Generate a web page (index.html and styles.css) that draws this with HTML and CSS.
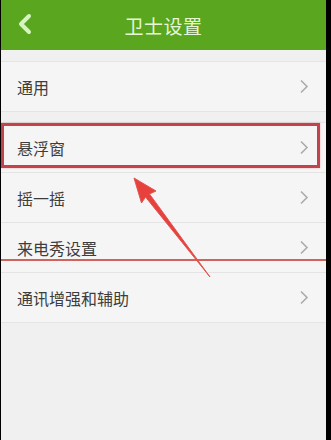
FILE: index.html
```html
<!DOCTYPE html>
<html lang="zh-CN">
<head>
    <meta charset="UTF-8">
    <meta name="viewport" content="width=device-width, initial-scale=1.0">
    <title>卫士设置</title>
    <link rel="stylesheet" href="styles.css">
</head>
<body>
    <div class="screen">
        <div class="topbar">
            <svg class="back" width="16" height="22" viewBox="0 0 16 22">
                <polyline points="12,3 4,11 12,19" fill="none" stroke="#d6f4c2" stroke-width="4" stroke-linecap="round" stroke-linejoin="round"/>
            </svg>
            <h1>卫士设置</h1>
        </div>

        <div class="list">
            <div class="group">
                <div class="row"><span>通用</span><i class="chev"></i></div>
            </div>
            <div class="group">
                <div class="row"><span>悬浮窗</span><i class="chev"></i></div>
                <div class="row"><span>摇一摇</span><i class="chev"></i></div>
                <div class="row"><span>来电秀设置</span><i class="chev"></i></div>
                <div class="row"><span>通讯增强和辅助</span><i class="chev"></i></div>
            </div>
        </div>

        <div class="mark-box"></div>
        <div class="mark-line"></div>
        <svg class="mark-arrow" width="331" height="440" viewBox="0 0 331 440">
            <polygon points="134,178 156,191 149.5,194 210,277 145.5,197 141.5,203" fill="#e8403c" stroke="#e25550" stroke-width="1" stroke-linejoin="round"/>
        </svg>
    </div>

    <script>
        document.querySelectorAll('.chev').forEach(function (el) {
            el.innerHTML = '<svg width="10" height="15" viewBox="0 0 10 15"><polyline points="2,1.5 8,7.5 2,13.5" fill="none" stroke="#ababab" stroke-width="1.6"/></svg>';
        });
    </script>
</body>
</html>
```

FILE: styles.css
```css
html {
    background-color: #000;
}

body {
    margin: 0;
    background-color: #000;
    font-family: "Noto Sans CJK SC", "Noto Sans", sans-serif;
}

.screen {
    position: relative;
    width: 325px;
    height: 440px;
    margin-left: 1px;
    background-color: #f0f0f0;
    overflow: hidden;
}

.topbar {
    position: relative;
    height: 50px;
    display: flex;
    align-items: center;
    justify-content: center;
    background-color: #5ba61f;
}

.topbar .back {
    position: absolute;
    left: 16px;
    top: 13px;
}

.topbar h1 {
    margin: 0;
    font-size: 19px;
    font-weight: normal;
    color: #e6f7d6;
    letter-spacing: 0.5px;
}

.list {
    padding-top: 11px;
}

.group {
    border-top: 1px solid #e4e1f0;
    border-bottom: 1px solid #e4e4e4;
    background-color: #f5f5f5;
}

.group + .group {
    margin-top: 10px;
    border-top-color: #e4e4e4;
}

.row {
    height: 49px;
    display: flex;
    align-items: center;
    justify-content: space-between;
    padding: 0 17px 0 16px;
    font-size: 16px;
    color: #3d3d3d;
}

.row + .row {
    border-top: 1px solid #e4e4e4;
}

.chev {
    display: flex;
}

.mark-box {
    position: absolute;
    left: 0;
    top: 123px;
    width: 313px;
    height: 39px;
    border: 3px solid #c2434c;
    box-shadow: 0 0 2px rgba(210, 80, 80, 0.4);
}

.mark-line {
    position: absolute;
    left: 0;
    top: 259px;
    width: 325px;
    height: 2px;
    background-color: #d0635e;
}

.mark-arrow {
    position: absolute;
    left: -1px;
    top: 0;
}
```
